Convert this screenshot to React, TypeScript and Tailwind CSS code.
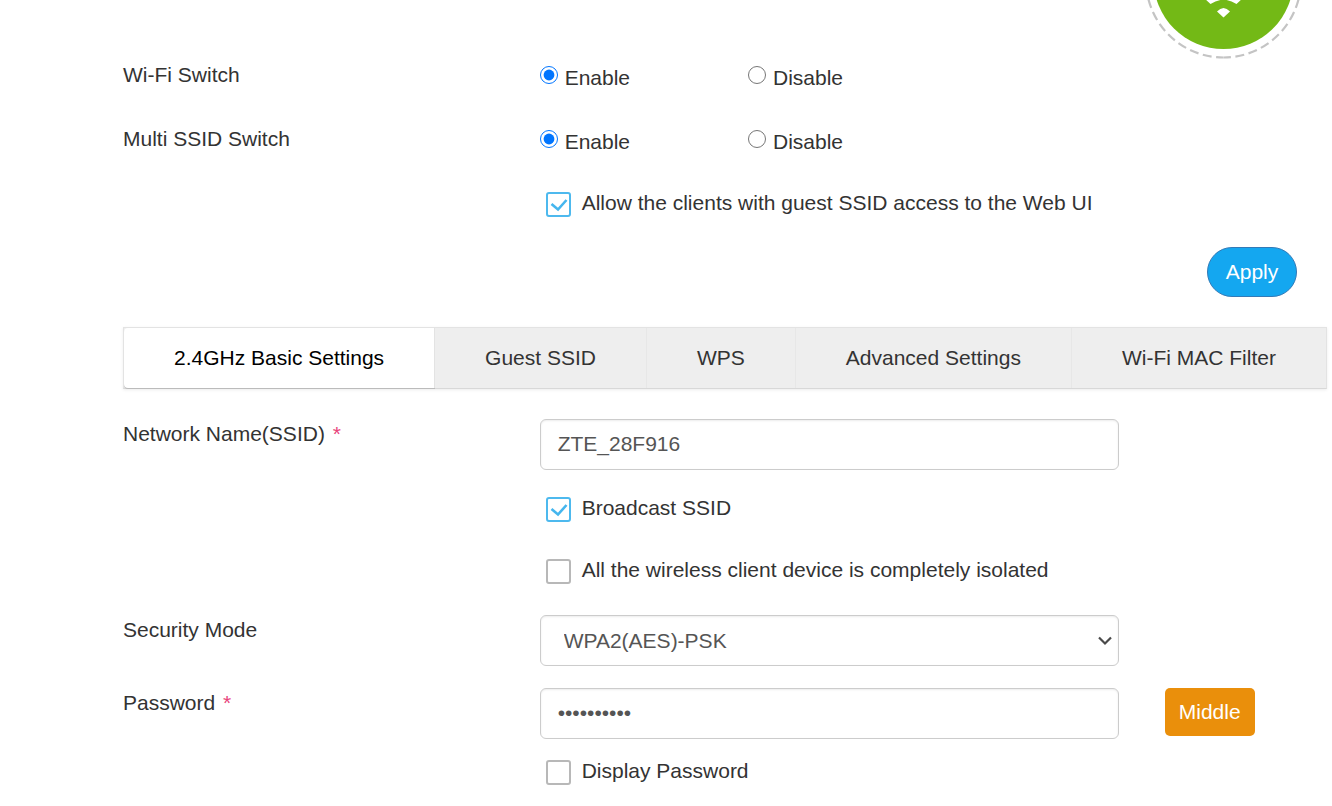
import { useState } from "react";

const tabs = [
  "2.4GHz Basic Settings",
  "Guest SSID",
  "WPS",
  "Advanced Settings",
  "Wi-Fi MAC Filter",
];

const securityModes = ["OPEN", "WPA2(AES)-PSK", "WPA-PSK/WPA2-PSK"];

const App: React.FC = () => {
  const [activeTab, setActiveTab] = useState(tabs[0]);
  const [showPassword, setShowPassword] = useState(false);

  return (
    <div className="bg-white pl-[123px] pr-[5px] pb-5 text-[21px] leading-[30px] text-[#333333] font-['Liberation_Sans',Arial,sans-serif]">
      <header className="flex justify-end pr-6">
        <WifiBadge />
      </header>

      <form onSubmit={(e) => e.preventDefault()}>
        <div className="flex flex-col gap-7">
          <SwitchRow title="Wi-Fi Switch" name="wifi" />
          <SwitchRow title="Multi SSID Switch" name="multi-ssid" />
          <div className="grid grid-cols-12 gap-x-[46px]">
            <div className="col-span-8 col-start-5">
              <CheckField
                text="Allow the clients with guest SSID access to the Web UI"
                defaultChecked
              />
            </div>
          </div>
        </div>
        <div className="mt-[29px] flex justify-end pr-[30px]">
          <button
            type="submit"
            className="h-[50px] w-[90px] rounded-full border border-[#337ab7] bg-[#14a7f0] text-white"
          >
            Apply
          </button>
        </div>
      </form>

      <div
        role="tablist"
        className="mt-[30px] flex h-[62px] border border-[#e3e3e3] border-b-[#d8d8d8] bg-[#eeeeee] shadow-[0_1px_3px_rgba(0,0,0,0.08)]"
      >
        {tabs.map((tab) => (
          <button
            key={tab}
            type="button"
            role="tab"
            aria-selected={tab === activeTab}
            onClick={() => setActiveTab(tab)}
            className={
              tab === activeTab
                ? "whitespace-nowrap rounded-l-[4px] border-r border-[#e3e3e3] bg-white px-[50px] text-black shadow-[0_1px_0_#bbbbbb]"
                : "whitespace-nowrap border-r border-[#e7e7e7] px-[50px] last:grow last:border-r-0"
            }
          >
            {tab}
          </button>
        ))}
      </div>

      <form
        className="mt-[30px] grid grid-cols-12 gap-x-[46px]"
        onSubmit={(e) => e.preventDefault()}
      >
        <FieldLabel htmlFor="ssid" text="Network Name(SSID)" required />
        <input
          id="ssid"
          type="text"
          defaultValue="ZTE_28F916"
          className="col-span-6 h-[51px] w-full rounded-[6px] border border-[#cccccc] px-[17px] pb-0.5 text-[#555555] shadow-[inset_0_1px_2px_rgba(0,0,0,0.08)]"
        />

        <div className="col-span-8 col-start-5 mt-[23px] mb-[30px] flex flex-col gap-8">
          <CheckField text="Broadcast SSID" defaultChecked />
          <CheckField text="All the wireless client device is completely isolated" />
        </div>

        <FieldLabel htmlFor="security" text="Security Mode" />
        <div className="relative col-span-6">
          <select
            id="security"
            defaultValue="WPA2(AES)-PSK"
            className="h-[51px] w-full appearance-none rounded-[6px] border border-[#cccccc] bg-white px-[23px] text-[#555555] shadow-[inset_0_1px_2px_rgba(0,0,0,0.08)]"
          >
            {securityModes.map((mode) => (
              <option key={mode}>{mode}</option>
            ))}
          </select>
          <svg
            className="pointer-events-none absolute top-5 right-1.5 h-3 w-4"
            viewBox="0 0 16 12"
            fill="none"
            stroke="#4a4a4a"
            strokeWidth="2.2"
          >
            <path d="M2 2.5 8 8.5 14 2.5" />
          </svg>
        </div>

        <div className="col-span-12 h-[22px]" />

        <FieldLabel htmlFor="password" text="Password" required />
        <input
          id="password"
          type={showPassword ? "text" : "password"}
          defaultValue="1234567890"
          className="col-span-6 h-[51px] w-full rounded-[6px] border border-[#cccccc] px-[17px] pb-0.5 text-[#555555] shadow-[inset_0_1px_2px_rgba(0,0,0,0.08)]"
        />
        <div className="col-span-2">
          <span className="flex h-12 w-[90px] items-center justify-center rounded-[5px] bg-[#ea8f0b] text-white">
            Middle
          </span>
        </div>

        <div className="col-span-8 col-start-5 mt-[17px]">
          <CheckField
            text="Display Password"
            onChange={(e) => setShowPassword(e.target.checked)}
          />
        </div>
      </form>
    </div>
  );
};
export default App;

const SwitchRow: React.FC<{ title: string; name: string }> = ({
  title,
  name,
}) => (
  <div
    role="radiogroup"
    aria-label={title}
    className="grid grid-cols-12 gap-x-[46px]"
  >
    <span className="col-span-4">{title}</span>
    <RadioField name={name} text="Enable" defaultChecked />
    <RadioField name={name} text="Disable" />
  </div>
);

const RadioField: React.FC<{
  name: string;
  text: string;
  defaultChecked?: boolean;
}> = ({ name, text, defaultChecked }) => (
  <label className="col-span-2 flex items-start gap-[7px]">
    <input
      type="radio"
      name={name}
      defaultChecked={defaultChecked}
      className="mt-[6px] size-[18px] shrink-0 accent-[#0075ff]"
    />
    <span className="leading-9">{text}</span>
  </label>
);

const CheckField: React.FC<{
  text: string;
  defaultChecked?: boolean;
  onChange?: React.ChangeEventHandler<HTMLInputElement>;
}> = ({ text, defaultChecked, onChange }) => (
  <label className="flex items-start gap-[11px] pl-[6px]">
    <span className="mt-1 grid shrink-0">
      <input
        type="checkbox"
        defaultChecked={defaultChecked}
        onChange={onChange}
        className="peer col-start-1 row-start-1 size-[25px] appearance-none rounded-[3px] border-2 border-[#b8b8b8] bg-white checked:border-[#4db9ee]"
      />
      <svg
        className="pointer-events-none invisible col-start-1 row-start-1 size-[25px] peer-checked:visible"
        viewBox="0 0 25 25"
        fill="none"
        stroke="#45b6ee"
        strokeWidth="2.6"
      >
        <path d="M5.5 12 12 17.5 20.5 8" />
      </svg>
    </span>
    <span>{text}</span>
  </label>
);

const FieldLabel: React.FC<{
  htmlFor: string;
  text: string;
  required?: boolean;
}> = ({ htmlFor, text, required }) => (
  <label htmlFor={htmlFor} className="col-span-4">
    {text} {required && <span className="ml-0.5 text-[#e8447c]">*</span>}
  </label>
);

const WifiBadge = () => (
  <svg width="160" height="60" viewBox="0 0 160 60" fill="none">
    {/* dashed ring, both halves start at the bottom */}
    <g stroke="#c4c4c4" strokeWidth="2.2" strokeDasharray="9 4.5" strokeDashoffset="1.5">
      <path d="M80.5 57.5A77.5 77.5 0 0 1 3 -20" />
      <path d="M80.5 57.5A77.5 77.5 0 0 0 158 -20" />
    </g>
    <circle cx="80.5" cy="-21" r="70" fill="#73b916" />
    <path d="M74 11.500Q80.500 4.500 87 11.500L80.500 17.500Z" fill="#fff" />
    <path d="M61 -2 67.500 4Q80.500 -4.500 93.500 4L100 -2Z" fill="#fff" />
  </svg>
);
